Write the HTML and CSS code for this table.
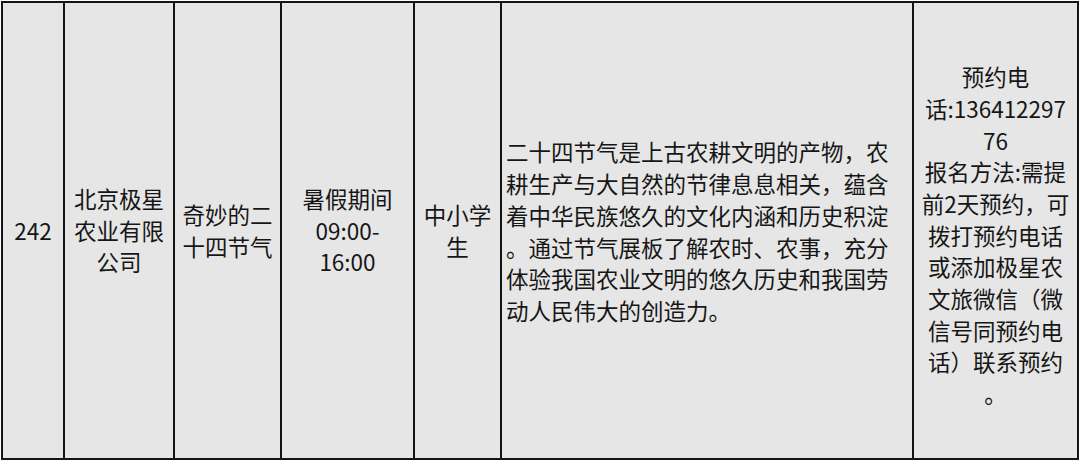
FILE: index.html
```html
<!DOCTYPE html>
<html lang="zh-CN">
<head>
<meta charset="utf-8">
<title>活动表</title>
<link rel="stylesheet" href="styles.css">
</head>
<body>
<div class="table">
  <div class="cell"><div class="txt">242</div></div>
  <div class="cell"><div class="txt">北京极星<br>农业有限<br>公司</div></div>
  <div class="cell"><div class="txt">奇妙的二<br>十四节气</div></div>
  <div class="cell"><div class="txt">暑假期间<br>09:00-<br>16:00</div></div>
  <div class="cell"><div class="txt">中小学<br>生</div></div>
  <div class="cell desc"><div class="txt">二十四节气是上古农耕文明的产物<span class="pc">，</span>农<br>耕生产与大自然的节律息息相关<span class="pc">，</span>蕴含<br>着中华民族悠久的文化内涵和历史积淀<br>。通过节气展板了解农时、农事<span class="pc">，</span>充分<br>体验我国农业文明的悠久历史和我国劳<br>动人民伟大的创造力。</div></div>
  <div class="cell contact"><div class="txt">预约电<br>话:136412297<br>76<br>报名方法:需提<br>前2天预约<span class="pc">，</span>可<br>拨打预约电话<br>或添加极星农<br>文旅微信（微<br>信号同预约电<br>话）联系预约<br>。</div></div>
</div>
</body>
</html>
```

FILE: styles.css
```css
html, body {
  margin: 0;
  padding: 0;
  background: #ffffff;
}
body {
  padding: 1px 0 0 1px;
}
.table {
  display: grid;
  grid-template-columns: 60px 108px 105px 131px 85px 410px 163px;
  grid-template-rows: 455px;
  gap: 2px;
  padding: 2px;
  width: 1078px;
  box-sizing: border-box;
  background: #141414;
  font-family: "Noto Sans CJK SC", "Noto Sans", sans-serif;
  font-size: 22.5px;
  line-height: 31.7px;
  color: #161616;
}
.cell {
  background: #e6e6e6;
  display: flex;
  align-items: center;
  justify-content: center;
  text-align: center;
  white-space: nowrap;
}
.desc {
  justify-content: flex-start;
  text-align: left;
  padding: 0 4px;
  padding-top: 2px;
}
.contact {
  padding-top: 10px;
}
.pc {
  font-family: "Noto Sans CJK TC", "Noto Sans CJK SC", sans-serif;
}
```
